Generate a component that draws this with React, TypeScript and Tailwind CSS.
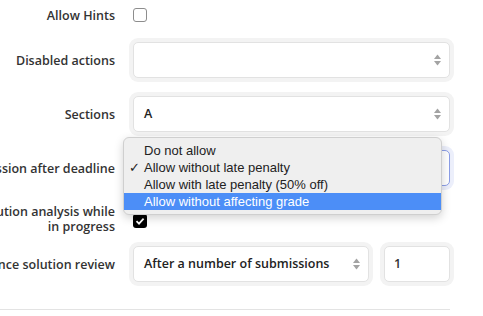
import React from "react";

const labelFont = { fontFamily: '"Open Sans", "Noto Sans", sans-serif' };
const menuFont = { fontFamily: '"Liberation Sans", Arial, sans-serif' };

function Arrows() {
  return (
    <svg width="7" height="12" viewBox="0 0 7 12" className="shrink-0">
      <path d="M3.5 0.5 L7 5 L0 5 Z" fill="#a3a3a3" />
      <path d="M0 7 L7 7 L3.5 11.5 Z" fill="#a3a3a3" />
    </svg>
  );
}

function Label({ children }: { children: React.ReactNode }) {
  return (
    <div className="w-[115px] shrink-0 flex flex-col items-end text-[12.5px] font-semibold leading-[15px] text-[#333] whitespace-nowrap">
      {children}
    </div>
  );
}

function Select({
  value,
  className = "w-[317px]",
  focused = false,
}: {
  value?: string;
  className?: string;
  focused?: boolean;
}) {
  return (
    <div
      className={`${className} h-[36px] rounded-[5px] bg-white flex items-center justify-between pl-[10px] pr-[8px] text-[12.5px] font-semibold text-[#222] ${
        focused
          ? "border border-[#8c9ee6] shadow-[0_0_0_4px_#eceffb]"
          : "border border-[#e2e2e2] shadow-[0_0_0_4px_#f3f3f3]"
      }`}
    >
      <span>{value}</span>
      <Arrows />
    </div>
  );
}

export default function App() {
  return (
    <div className="relative w-[483px] h-[316px] overflow-hidden bg-white" style={labelFont}>
      <div className="flex flex-col">
        <div className="flex items-center h-[30px] gap-[18px]">
          <Label>Allow Hints</Label>
          <div className="w-[14px] h-[14px] rounded-[3px] border border-[#8d8d8d] bg-white" />
        </div>

        <div className="flex items-center mt-[12px] h-[36px] gap-[18px]">
          <Label>Disabled actions</Label>
          <Select />
        </div>

        <div className="flex items-center mt-[18px] h-[36px] gap-[18px]">
          <Label>Sections</Label>
          <Select value="A" />
        </div>

        <div className="flex items-center mt-[18px] h-[36px] gap-[18px]">
          <Label>Allow submission after deadline</Label>
          <Select value="Allow without late penalty" focused />
        </div>

        <div className="flex items-center mt-[18px] h-[30px] gap-[18px]">
          <Label>
            <span>Allow solution analysis while</span>
            <span>in progress</span>
          </Label>
          <div className="w-[14px] h-[14px] mt-[4px] rounded-[3px] bg-black flex items-center justify-center">
            <svg width="10" height="10" viewBox="0 0 10 10">
              <path d="M1.5 5.2 L4 7.6 L8.6 2.6" stroke="white" strokeWidth="1.8" fill="none" />
            </svg>
          </div>
        </div>

        <div className="flex items-center mt-[12px] h-[36px] gap-[18px]">
          <Label>Reference solution review</Label>
          <div className="flex gap-[15px]">
            <Select value="After a number of submissions" className="w-[236px]" />
            <div className="w-[66px] h-[36px] rounded-[5px] bg-white border border-[#e2e2e2] shadow-[0_0_0_4px_#f3f3f3] flex items-center pl-[9px] text-[12.5px] font-semibold text-[#333]">
              1
            </div>
          </div>
        </div>

        <div className="mt-[27px] w-[450px] border-t border-[#e3e3e3]" />
      </div>

      <div
        className="absolute left-[123px] top-[137px] w-[319px] rounded-[6px] bg-[#efefef] border border-[#cfcfcf] shadow-[0_3px_10px_rgba(0,0,0,0.18)] pt-[4px] pb-[4px] text-[13px] leading-[17px] text-[#222]"
        style={menuFont}
      >
        {[
          "Do not allow",
          "Allow without late penalty",
          "Allow with late penalty (50% off)",
          "Allow without affecting grade",
        ].map((item, i) => (
          <div
            key={item}
            className={`relative h-[17px] pl-[20px] ${i === 3 ? "bg-[#4c8ef7] text-white" : ""}`}
          >
            {i === 1 && <span className="absolute left-[5px] top-0">✓</span>}
            {item}
          </div>
        ))}
      </div>
    </div>
  );
}
